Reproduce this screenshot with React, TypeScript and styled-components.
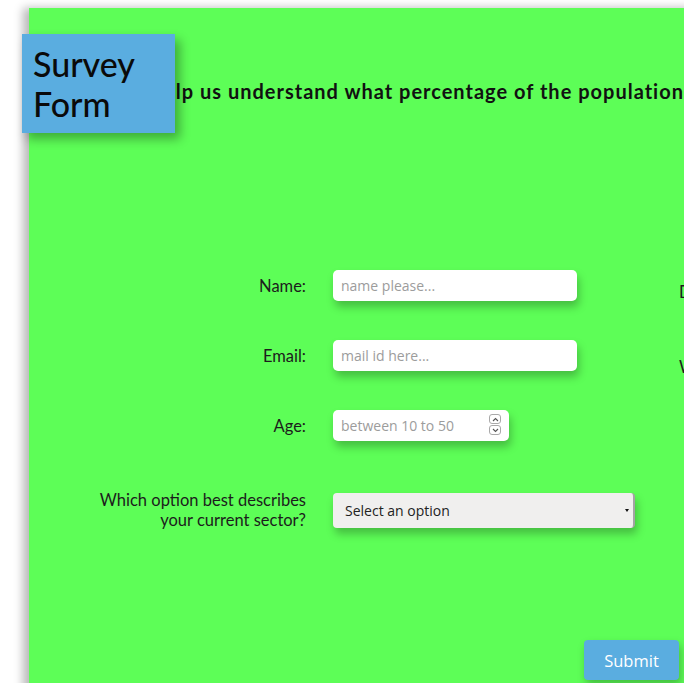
import React from 'react';
import styled, { createGlobalStyle } from 'styled-components';

const GlobalStyle = createGlobalStyle`
  html, body {
    margin: 0;
    padding: 0;
    background: #ffffff;
    overflow: hidden;
  }
  body {
    padding: 8px 0 0 0;
    font-family: "Noto Sans", "DejaVu Sans", sans-serif;
  }
`;

const Page = styled.div`
  position: relative;
  padding-left: 29px;
`;

const Sheet = styled.main`
  width: 1210px;
  min-height: 700px;
  background: #5dfe57;
  box-shadow: -6px 0 9px rgba(0, 0, 0, 0.28);
  display: flex;
  flex-direction: column;
`;

const TitleBox = styled.h1`
  position: absolute;
  left: 22px;
  top: 26px;
  width: 153px;
  height: 99px;
  box-sizing: border-box;
  margin: 0;
  padding: 10px 0 0 11px;
  background: #5aade0;
  box-shadow: 5px 6px 10px rgba(0, 0, 0, 0.32);
  font-family: "Lato", "Noto Sans", sans-serif;
  font-weight: 500;
  font-size: 34px;
  line-height: 40px;
  color: #0a0a0a;
  z-index: 2;
`;

const Intro = styled.p`
  margin: 70px 0 0 119px;
  font-family: "Lato", "Noto Sans", sans-serif;
  font-weight: 700;
  font-size: 20px;
  letter-spacing: 1px;
  line-height: 26px;
  color: #111;
  white-space: nowrap;
`;

const Columns = styled.form`
  display: flex;
  margin-top: 166px;
`;

const Column = styled.div<{ $labelWidth: number; $offset?: number }>`
  display: grid;
  grid-template-columns: ${(p) => p.$labelWidth}px auto;
  column-gap: 27px;
  row-gap: 39px;
  align-items: center;
  align-content: start;
  margin-left: ${(p) => p.$offset ?? 0}px;
  padding-top: ${(p) => (p.$offset ? 12 : 0)}px;
`;

const Label = styled.label<{ $align?: 'left' | 'right'; $push?: number }>`
  text-align: ${(p) => p.$align ?? 'right'};
  font-family: "Lato", "Noto Sans", sans-serif;
  font-size: 16.5px;
  line-height: 20px;
  color: #1c1c1c;
  white-space: nowrap;
  margin-top: ${(p) => p.$push ?? 0}px;
`;

const TextInput = styled.input<{ $width: number }>`
  width: ${(p) => p.$width}px;
  height: 31px;
  box-sizing: border-box;
  border: none;
  border-radius: 5px;
  padding: 0 8px;
  background: #ffffff;
  box-shadow: 2px 6px 9px rgba(0, 0, 0, 0.25);
  font-family: "Open Sans", "Noto Sans", sans-serif;
  font-size: 14px;
  outline: none;

  &::placeholder {
    color: #9c9c9c;
  }
`;

const SpinWrap = styled.div`
  position: relative;
  width: 176px;
`;

const Spinner = styled.div`
  position: absolute;
  right: 8px;
  top: 4px;
  display: flex;
  flex-direction: column;
  gap: 1px;
`;

const SpinKey = styled.span`
  width: 12px;
  height: 10px;
  box-sizing: border-box;
  border: 1px solid #a9a9a9;
  border-radius: 3px;
  display: flex;
  align-items: center;
  justify-content: center;
`;

const SelectWrap = styled.div`
  position: relative;
  width: 302px;
  margin-top: 10px;
`;

const Select = styled.select`
  width: 302px;
  height: 35px;
  box-sizing: border-box;
  appearance: none;
  border: none;
  border-right: 2px solid #a3a3a3;
  border-radius: 4px;
  padding: 0 12px;
  background: #f0efee;
  box-shadow: 2px 6px 9px rgba(0, 0, 0, 0.25);
  font-family: "Open Sans", "Noto Sans", sans-serif;
  font-size: 14px;
  font-weight: 500;
  color: #222;
  outline: none;
`;

const Caret = styled.span`
  position: absolute;
  right: 6px;
  top: 16px;
  width: 0;
  height: 0;
  border-left: 2.5px solid transparent;
  border-right: 2.5px solid transparent;
  border-top: 3px solid #111;
  pointer-events: none;
`;

const Footer = styled.div`
  display: flex;
  margin: 110px 0 0 555px;
`;

const SubmitButton = styled.button`
  width: 95px;
  height: 40px;
  border: none;
  border-radius: 4px;
  background: #5aade0;
  color: #ffffff;
  font-family: "Open Sans", "Noto Sans", sans-serif;
  font-size: 16.5px;
  box-shadow: 2px 5px 9px rgba(0, 0, 0, 0.25);
  cursor: pointer;
`;

const Chevron = ({ up }: { up?: boolean }) => (
  <svg width="7" height="5" viewBox="0 0 7 5">
    <path
      d={up ? 'M1 4 L3.5 1.5 L6 4' : 'M1 1 L3.5 3.5 L6 1'}
      fill="none"
      stroke="#555"
      strokeWidth="1.1"
    />
  </svg>
);

export default function App() {
  return (
    <>
      <GlobalStyle />
      <Page>
        <TitleBox>Survey Form</TitleBox>
        <Sheet>
          <Intro>Help us understand what percentage of the population works in which sector</Intro>
          <Columns onSubmit={(e) => e.preventDefault()}>
            <Column $labelWidth={277}>
              <Label htmlFor="name">Name:</Label>
              <TextInput id="name" type="text" placeholder="name please..." $width={244} />
              <Label htmlFor="email">Email:</Label>
              <TextInput id="email" type="email" placeholder="mail id here..." $width={244} />
              <Label htmlFor="age">Age:</Label>
              <SpinWrap>
                <TextInput id="age" type="text" placeholder="between 10 to 50" $width={176} />
                <Spinner>
                  <SpinKey><Chevron up /></SpinKey>
                  <SpinKey><Chevron /></SpinKey>
                </Spinner>
              </SpinWrap>
              <Label htmlFor="sector" $push={10}>
                Which option best describes
                <br />
                your current sector?
              </Label>
              <SelectWrap>
                <Select id="sector" defaultValue="">
                  <option value="" disabled>Select an option</option>
                  <option value="it">IT</option>
                  <option value="health">Healthcare</option>
                  <option value="edu">Education</option>
                </Select>
                <Caret />
              </SelectWrap>
            </Column>
            <Column $labelWidth={160} $offset={44}>
              <Label $align="left">Degree:</Label>
              <span />
              <Label $align="left" $push={16}>Would you recommend us?</Label>
              <span />
            </Column>
          </Columns>
          <Footer>
            <SubmitButton type="submit">Submit</SubmitButton>
          </Footer>
        </Sheet>
      </Page>
    </>
  );
}
